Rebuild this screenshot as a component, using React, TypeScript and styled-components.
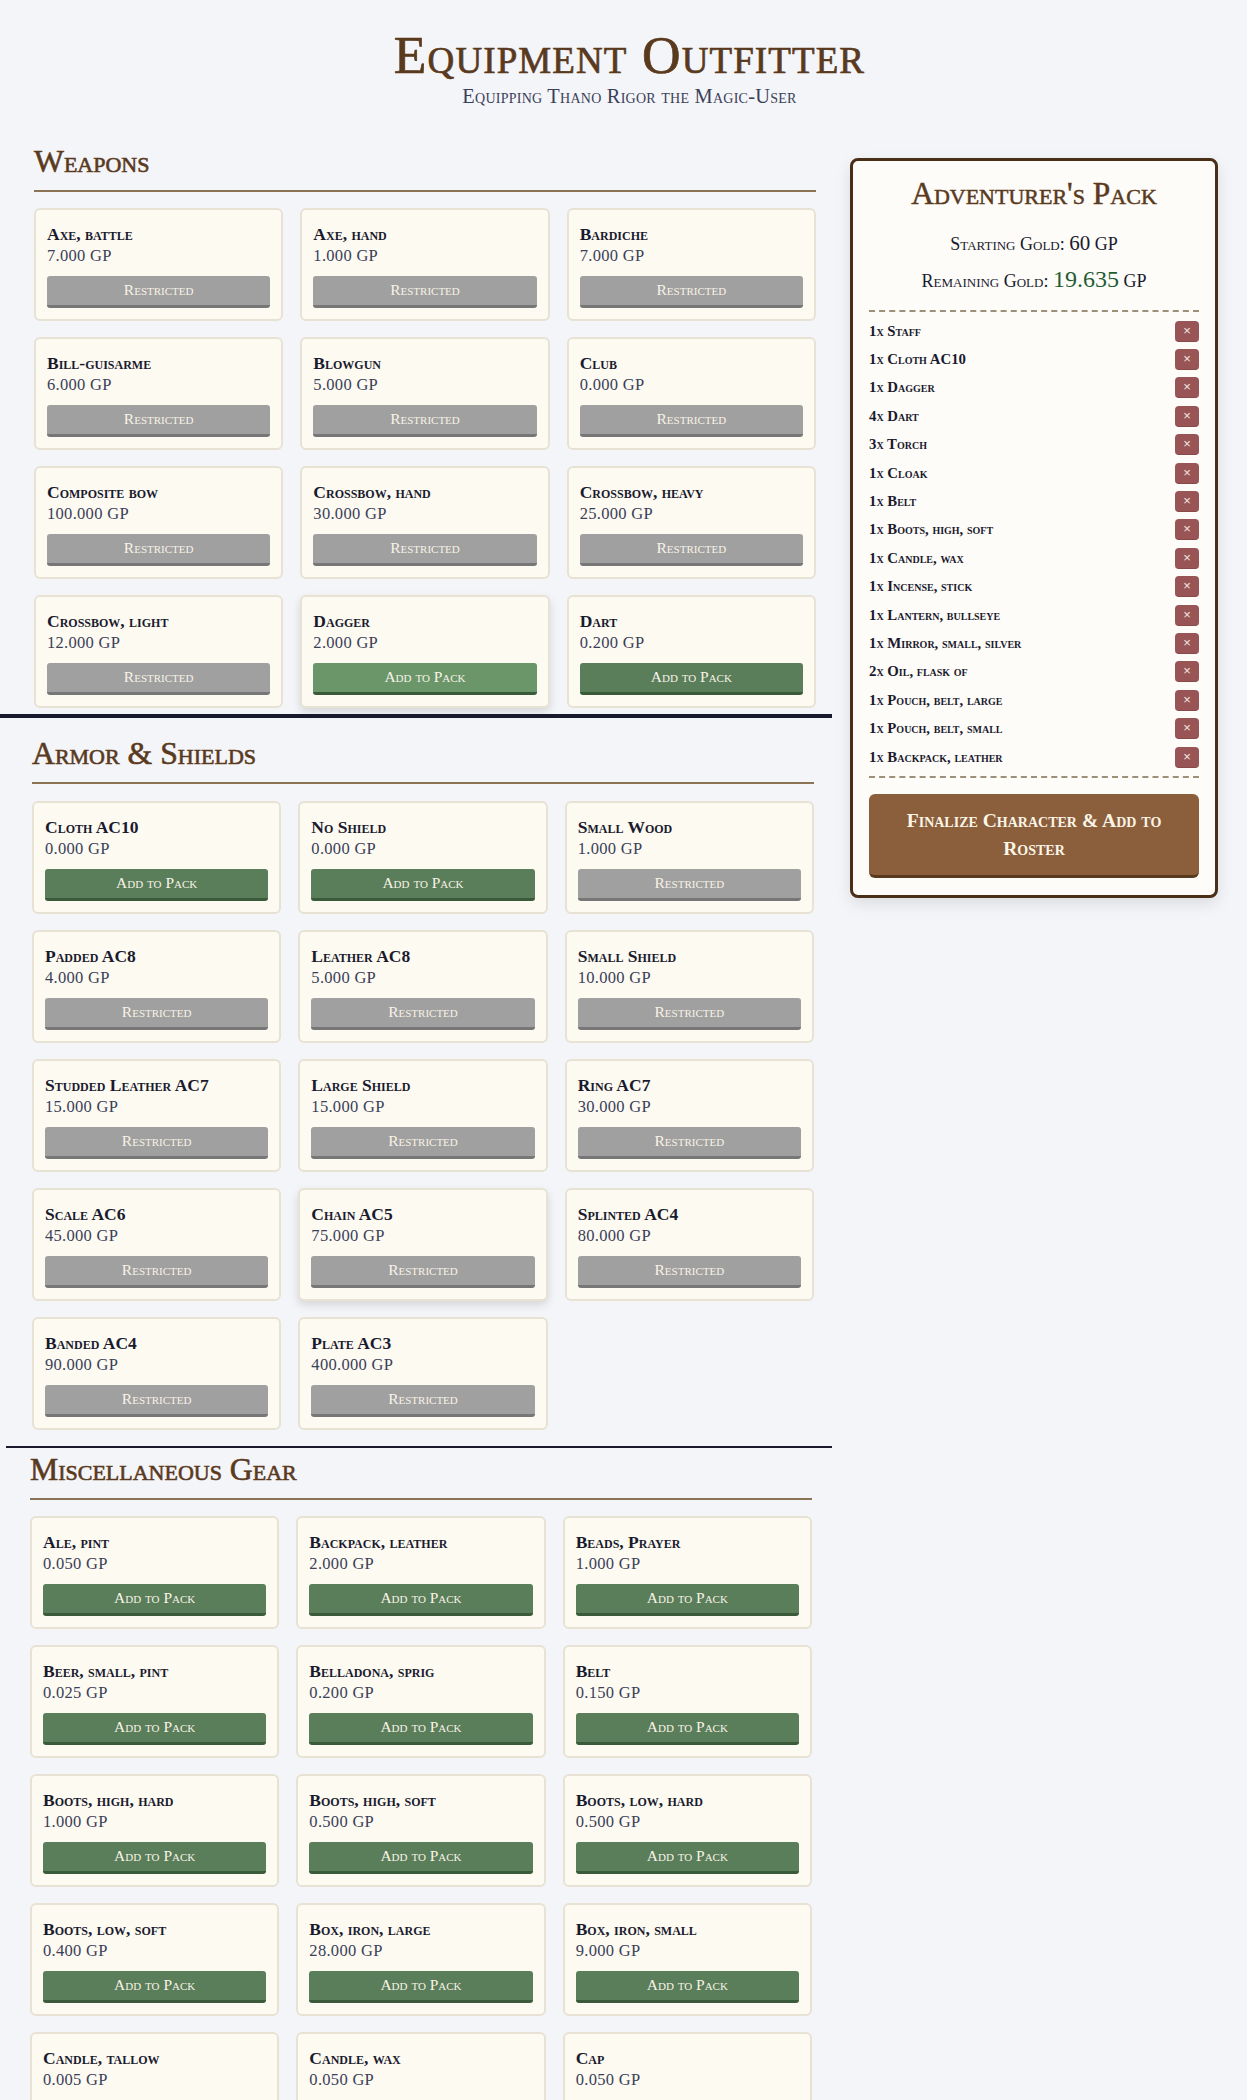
import React from 'react';
import styled, { createGlobalStyle } from 'styled-components';

interface Item {
  name: string;
  price: string;
  open?: boolean;
  raised?: boolean;
}

const weapons: Item[] = [
  { name: 'Axe, battle', price: '7.000' },
  { name: 'Axe, hand', price: '1.000' },
  { name: 'Bardiche', price: '7.000' },
  { name: 'Bill-guisarme', price: '6.000' },
  { name: 'Blowgun', price: '5.000' },
  { name: 'Club', price: '0.000' },
  { name: 'Composite bow', price: '100.000' },
  { name: 'Crossbow, hand', price: '30.000' },
  { name: 'Crossbow, heavy', price: '25.000' },
  { name: 'Crossbow, light', price: '12.000' },
  { name: 'Dagger', price: '2.000', open: true, raised: true },
  { name: 'Dart', price: '0.200', open: true },
];

const armor: Item[] = [
  { name: 'Cloth AC10', price: '0.000', open: true },
  { name: 'No Shield', price: '0.000', open: true },
  { name: 'Small Wood', price: '1.000' },
  { name: 'Padded AC8', price: '4.000' },
  { name: 'Leather AC8', price: '5.000' },
  { name: 'Small Shield', price: '10.000' },
  { name: 'Studded Leather AC7', price: '15.000' },
  { name: 'Large Shield', price: '15.000' },
  { name: 'Ring AC7', price: '30.000' },
  { name: 'Scale AC6', price: '45.000' },
  { name: 'Chain AC5', price: '75.000', raised: true },
  { name: 'Splinted AC4', price: '80.000' },
  { name: 'Banded AC4', price: '90.000' },
  { name: 'Plate AC3', price: '400.000' },
];

const gear: Item[] = [
  { name: 'Ale, pint', price: '0.050', open: true },
  { name: 'Backpack, leather', price: '2.000', open: true },
  { name: 'Beads, Prayer', price: '1.000', open: true },
  { name: 'Beer, small, pint', price: '0.025', open: true },
  { name: 'Belladona, sprig', price: '0.200', open: true },
  { name: 'Belt', price: '0.150', open: true },
  { name: 'Boots, high, hard', price: '1.000', open: true },
  { name: 'Boots, high, soft', price: '0.500', open: true },
  { name: 'Boots, low, hard', price: '0.500', open: true },
  { name: 'Boots, low, soft', price: '0.400', open: true },
  { name: 'Box, iron, large', price: '28.000', open: true },
  { name: 'Box, iron, small', price: '9.000', open: true },
  { name: 'Candle, tallow', price: '0.005', open: true },
  { name: 'Candle, wax', price: '0.050', open: true },
  { name: 'Cap', price: '0.050', open: true },
];

const pack = [
  '1x Staff',
  '1x Cloth AC10',
  '1x Dagger',
  '4x Dart',
  '3x Torch',
  '1x Cloak',
  '1x Belt',
  '1x Boots, high, soft',
  '1x Candle, wax',
  '1x Incense, stick',
  '1x Lantern, bullseye',
  '1x Mirror, small, silver',
  '2x Oil, flask of',
  '1x Pouch, belt, large',
  '1x Pouch, belt, small',
  '1x Backpack, leather',
];

const GlobalStyle = createGlobalStyle`
  html, body {
    margin: 0;
    background: #f4f5f8;
    overflow-x: hidden;
  }
  body {
    font-family: "Liberation Serif", serif;
    font-variant: small-caps;
    color: #1a1a2e;
  }
`;

const Page = styled.div`
  height: 2100px;
  overflow: hidden;
`;

const Header = styled.header`
  padding: 27px 0 0 12px;
  height: 118px;
  box-sizing: border-box;
  text-align: center;
`;

const Title = styled.h1`
  margin: 0;
  font-size: 53.4px;
  line-height: 56px;
  font-weight: 400;
  letter-spacing: 1.1px;
  color: #5a3a1e;
  -webkit-text-stroke: 0.7px #5a3a1e;
`;

const Subtitle = styled.p`
  margin: 1px 0 0;
  font-size: 20.4px;
  line-height: 24px;
  letter-spacing: 0.25px;
  color: #3a4058;
`;

const Layout = styled.div`
  display: grid;
  grid-template-columns: 832px 368px;
  column-gap: 18px;
  align-items: start;
`;

const Main = styled.main`
  min-width: 0;
`;

const Section = styled.section<{ $indent: number }>`
  padding-left: ${(p) => p.$indent}px;
  width: 782px;
`;

const SectionTitle = styled.h2<{ $top: number; $rule: number; $after: number }>`
  margin: ${(p) => p.$top}px 0 ${(p) => p.$after}px;
  height: 48px;
  font-size: 31.7px;
  line-height: 40px;
  font-weight: 400;
  color: #5a3a1e;
  -webkit-text-stroke: 0.6px #5a3a1e;
  border-bottom: ${(p) => p.$rule}px solid #8b7355;
`;

const Grid = styled.div`
  display: grid;
  grid-template-columns: repeat(3, 1fr);
  grid-auto-rows: 113px;
  gap: 16px 17px;
`;

const Card = styled.article<{ $raised?: boolean }>`
  box-sizing: border-box;
  padding: 13px 11px 11px;
  background: #fdfaf2;
  border: 2px solid #e7e2d4;
  border-radius: 6px;
  box-shadow: ${(p) => (p.$raised ? '0 4px 10px rgba(0, 0, 0, 0.13)' : 'none')};
`;

const ItemName = styled.div`
  font-size: 17.5px;
  line-height: 22px;
  font-weight: 700;
  color: #1a1a2e;
`;

const ItemPrice = styled.div`
  font-size: 16.5px;
  line-height: 22px;
  letter-spacing: 0.3px;
  color: #3a4058;
`;

const BuyButton = styled.button<{ $open?: boolean; $raised?: boolean }>`
  display: block;
  width: 100%;
  height: 32px;
  margin-top: 9px;
  padding: 0 0 2px;
  font-family: inherit;
  font-variant: small-caps;
  font-size: 15.5px;
  color: #f8f3e6;
  border: 0;
  border-radius: 3px;
  background: ${(p) => (p.$open ? (p.$raised ? '#6a966a' : '#5a7d5a') : '#a0a0a0')};
  border-bottom: 3px solid ${(p) => (p.$open ? '#3a5a3a' : '#777777')};
`;

const Divider = styled.hr<{ $left: number; $thick: number; $top: number }>`
  margin: ${(p) => p.$top}px 0 0 ${(p) => p.$left}px;
  height: ${(p) => p.$thick}px;
  border: 0;
  background: #1a1a2e;
`;

const Sidebar = styled.aside`
  box-sizing: border-box;
  height: 740px;
  margin-top: 40px;
  padding: 15px 16px 16px;
  background: #fdfcf8;
  border: 3px solid #4a2f18;
  border-radius: 8px;
  box-shadow: 0 6px 16px rgba(0, 0, 0, 0.1);
  text-align: center;
`;

const PackTitle = styled.h3`
  margin: 0;
  font-size: 31.4px;
  line-height: 36px;
  font-weight: 400;
  color: #5a3a1e;
  -webkit-text-stroke: 0.5px #5a3a1e;
`;

const Gold = styled.p<{ $top: number }>`
  margin: ${(p) => p.$top}px 0 0;
  font-size: 18px;
  line-height: 24px;
  color: #1a1a2e;
`;

const GoldValue = styled.span<{ $big?: boolean }>`
  font-size: ${(p) => (p.$big ? 24 : 21)}px;
  color: ${(p) => (p.$big ? '#1f5c34' : '#1a1a2e')};
`;

const PackList = styled.ul`
  list-style: none;
  margin: 17px 0 0;
  padding: 5px 0 5.2px;
  border-top: 2px dashed #9c9078;
  border-bottom: 2px dashed #9c9078;
`;

const PackRow = styled.li`
  display: flex;
  align-items: center;
  justify-content: space-between;
  height: 28.4px;
  font-size: 14.8px;
  font-weight: 700;
  color: #1a1a2e;
`;

const RemoveButton = styled.button`
  width: 24px;
  height: 21px;
  padding: 0;
  font-family: "Liberation Sans", sans-serif;
  font-size: 13px;
  line-height: 18px;
  color: #f6e6e0;
  background: #995555;
  border: 0;
  border-bottom: 1px solid #8a4a4a;
  border-radius: 4px;
`;

const FinalizeButton = styled.button`
  display: block;
  width: 100%;
  height: 84px;
  margin-top: 16px;
  padding: 0 24px;
  font-family: inherit;
  font-variant: small-caps;
  font-size: 19.6px;
  line-height: 28px;
  font-weight: 700;
  color: #fbf5e6;
  background: #8b5e3c;
  border: 0;
  border-bottom: 3px solid #5a3a1e;
  border-radius: 6px;
`;

function ItemCard({ item }: { item: Item }) {
  return (
    <Card $raised={item.raised}>
      <ItemName>{item.name}</ItemName>
      <ItemPrice>{item.price} GP</ItemPrice>
      <BuyButton $open={item.open} $raised={item.raised}>
        {item.open ? 'Add to Pack' : 'Restricted'}
      </BuyButton>
    </Card>
  );
}

function App() {
  return (
    <Page>
      <GlobalStyle />
      <Header>
        <Title>Equipment Outfitter</Title>
        <Subtitle>Equipping Thano Rigor the Magic-User</Subtitle>
      </Header>
      <Layout>
        <Main>
          <Section $indent={34}>
            <SectionTitle $top={24} $rule={2} $after={16}>Weapons</SectionTitle>
            <Grid>
              {weapons.map((item) => (
                <ItemCard key={item.name} item={item} />
              ))}
            </Grid>
          </Section>
          <Divider $left={0} $thick={3.5} $top={6} />
          <Section $indent={32}>
            <SectionTitle $top={16.5} $rule={2} $after={17}>Armor &amp; Shields</SectionTitle>
            <Grid>
              {armor.map((item) => (
                <ItemCard key={item.name} item={item} />
              ))}
            </Grid>
          </Section>
          <Divider $left={6} $thick={2} $top={16} />
          <Section $indent={30}>
            <SectionTitle $top={1.5} $rule={2.5} $after={16.5}>Miscellaneous Gear</SectionTitle>
            <Grid>
              {gear.map((item) => (
                <ItemCard key={item.name} item={item} />
              ))}
            </Grid>
          </Section>
        </Main>
        <Sidebar>
          <PackTitle>Adventurer's Pack</PackTitle>
          <Gold $top={19}>
            Starting Gold: <GoldValue>60</GoldValue> GP
          </Gold>
          <Gold $top={11}>
            Remaining Gold: <GoldValue $big>19.635</GoldValue> GP
          </Gold>
          <PackList>
            {pack.map((entry) => (
              <PackRow key={entry}>
                {entry}
                <RemoveButton>×</RemoveButton>
              </PackRow>
            ))}
          </PackList>
          <FinalizeButton>Finalize Character &amp; Add to Roster</FinalizeButton>
        </Sidebar>
      </Layout>
    </Page>
  );
}

export default App;
